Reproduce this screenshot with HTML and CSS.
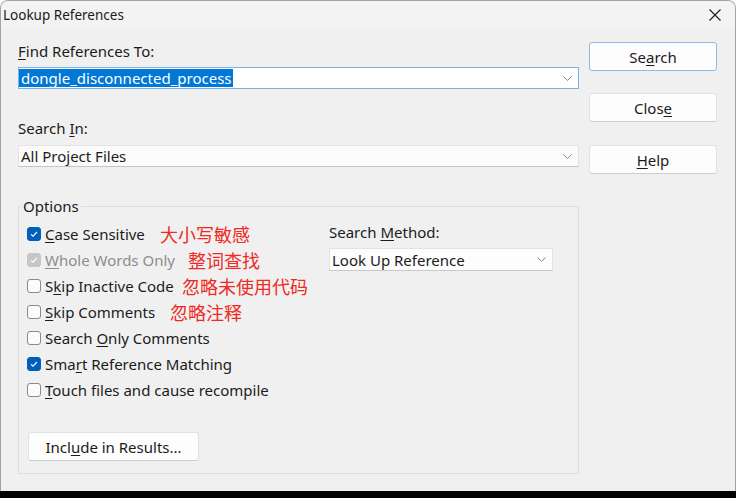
FILE: index.html
```html
<!DOCTYPE html>
<html lang="en">
<head>
<meta charset="utf-8">
<title>Lookup References</title>
<link rel="stylesheet" href="styles.css">
</head>
<body>
<div class="window">
  <div class="titlebar">
    <span class="title">Lookup References</span>
    <svg class="close-x" width="12" height="12" viewBox="0 0 12 12"><path d="M0.5 0.5 L11.5 11.5 M11.5 0.5 L0.5 11.5" stroke="#1a1a1a" stroke-width="1.1" fill="none"/></svg>
  </div>
  <div class="content">
    <div class="main">
      <div class="field-label"><u>F</u>ind References To:</div>
      <div class="combo combo-active">
        <span class="selected">dongle_disconnected_process</span>
        <svg class="chev" width="9" height="5" viewBox="0 0 9 5"><polyline points="0.5,0.5 4.5,4.5 8.5,0.5" stroke="#8a8a8a" stroke-width="1" fill="none"/></svg>
      </div>
      <div class="field-label label-searchin">Search <u>I</u>n:</div>
      <div class="combo combo-plain">
        <span class="combo-text">All Project Files</span>
        <svg class="chev" width="9" height="5" viewBox="0 0 9 5"><polyline points="0.5,0.5 4.5,4.5 8.5,0.5" stroke="#8a8a8a" stroke-width="1" fill="none"/></svg>
      </div>
      <fieldset class="options">
        <legend>Options</legend>
        <div class="options-body">
          <div class="checks">
            <div class="check-row">
              <span class="box checked"><svg width="12" height="12" viewBox="0 0 12 12"><path d="M3 6.3 L5 8.2 L9 4" stroke="#fff" stroke-width="1.1" fill="none"/></svg></span>
              <span><u>C</u>ase Sensitive</span>
              <span class="note note-case">大小写敏感</span>
            </div>
            <div class="check-row disabled">
              <span class="box checked-disabled"><svg width="12" height="12" viewBox="0 0 12 12"><path d="M3 6.3 L5 8.2 L9 4" stroke="#fff" stroke-width="1.1" fill="none"/></svg></span>
              <span><u>W</u>hole Words Only</span>
              <span class="note note-whole">整词查找</span>
            </div>
            <div class="check-row">
              <span class="box"></span>
              <span>S<u>k</u>ip Inactive Code</span>
              <span class="note note-inactive">忽略未使用代码</span>
            </div>
            <div class="check-row">
              <span class="box"></span>
              <span><u>S</u>kip Comments</span>
              <span class="note note-comments">忽略注释</span>
            </div>
            <div class="check-row">
              <span class="box"></span>
              <span>Search <u>O</u>nly Comments</span>
            </div>
            <div class="check-row">
              <span class="box checked"><svg width="12" height="12" viewBox="0 0 12 12"><path d="M3 6.3 L5 8.2 L9 4" stroke="#fff" stroke-width="1.1" fill="none"/></svg></span>
              <span>Sma<u>r</u>t Reference Matching</span>
            </div>
            <div class="check-row">
              <span class="box"></span>
              <span><u>T</u>ouch files and cause recompile</span>
            </div>
          </div>
          <div class="method">
            <div class="method-label">Search <u>M</u>ethod:</div>
            <div class="combo combo-small">
              <span class="combo-text">Look Up Reference</span>
              <svg class="chev" width="9" height="5" viewBox="0 0 9 5"><polyline points="0.5,0.5 4.5,4.5 8.5,0.5" stroke="#8a8a8a" stroke-width="1" fill="none"/></svg>
            </div>
          </div>
        </div>
        <button class="btn btn-include">Incl<u>u</u>de in Results...</button>
      </fieldset>
    </div>
    <div class="side">
      <button class="btn btn-default btn-search">Se<u>a</u>rch</button>
      <button class="btn btn-close">Clos<u>e</u></button>
      <button class="btn btn-help"><u>H</u>elp</button>
    </div>
  </div>
</div>
<div class="taskbar"></div>
</body>
</html>
```

FILE: styles.css
```css
html, body {
  margin: 0;
  padding: 0;
}
body {
  background: #ffffff;
  font-family: "Noto Sans", "Liberation Sans", sans-serif;
  font-size: 15px;
  color: #1b1b1b;
}
u {
  text-decoration-thickness: 1px;
  text-underline-offset: 2px;
}
.window {
  box-sizing: border-box;
  width: 736px;
  height: 491px;
  border: 1px solid #a3a3a3;
  border-bottom: none;
  border-radius: 8px 8px 0 0;
  background: #f0f0f0;
  overflow: hidden;
  display: flex;
  flex-direction: column;
}
.titlebar {
  height: 28px;
  flex: none;
  background: #f3f3f3;
  display: flex;
  align-items: center;
  justify-content: space-between;
  padding: 0 14px 0 2px;
}
.title {
  font-size: 13.5px;
  line-height: 18px;
}
.content {
  display: flex;
  gap: 10px;
  padding: 0 18px 0 17px;
}
.main {
  width: 561px;
  display: flex;
  flex-direction: column;
}
.field-label {
  line-height: 18px;
  margin-top: 13px;
}
.label-searchin {
  margin-top: 30px;
}
.combo {
  box-sizing: border-box;
  height: 22px;
  display: flex;
  align-items: center;
  justify-content: space-between;
  padding: 0 6px 0 2px;
  line-height: 18px;
}
.combo-active {
  margin-top: 7px;
  border: 1px solid #7ab3e6;
  background: #ffffff;
  padding-left: 0;
}
.selected {
  background: #0078d7;
  color: #ffffff;
  padding: 0 1px 0 2px;
}
.combo-plain {
  margin-top: 8px;
  background: #fbfbfb;
  border: 1px solid #e3e3e3;
  border-bottom-color: #c4c4c4;
}
.options {
  margin: 30px 0 0;
  padding: 6px 8px 12px;
  border: 1px solid #dcdcdc;
  min-width: 0;
}
.options legend {
  padding: 0 2px;
  margin-left: -6px;
  line-height: 18px;
}
.options-body {
  display: flex;
}
.checks {
  width: 302px;
  flex: none;
}
.check-row {
  position: relative;
  height: 26px;
  display: flex;
  align-items: center;
  gap: 4px;
}
.box {
  box-sizing: border-box;
  width: 14px;
  height: 14px;
  border: 1px solid #8b8b8b;
  border-radius: 3px;
  background: #fbfbfb;
  display: flex;
  align-items: center;
  justify-content: center;
}
.box.checked {
  background: #005fb8;
  border-color: #005fb8;
}
.box.checked-disabled {
  background: #c6c6c6;
  border-color: #c6c6c6;
}
.disabled {
  color: #8d8d8d;
}
.note {
  position: absolute;
  top: 0;
  line-height: 26px;
  font-family: "Noto Sans CJK SC", "Noto Sans", sans-serif;
  font-size: 18px;
  color: #ee2a24;
  white-space: nowrap;
}
.note-case { left: 133px; }
.note-whole { left: 161px; }
.note-inactive { left: 155px; }
.note-comments { left: 143px; }
.method {
  display: flex;
  flex-direction: column;
}
.method-label {
  line-height: 18px;
  margin-top: 2px;
}
.combo-small {
  width: 224px;
  height: 23px;
  margin-top: 7px;
  background: #fdfdfd;
  border: 1px solid #e3e3e3;
  border-bottom-color: #c8c8c8;
}
.btn {
  box-sizing: border-box;
  height: 29px;
  padding: 0;
  background: #fdfdfd;
  border: 1px solid #e2e2e2;
  border-bottom-color: #cdcdcd;
  border-radius: 3px;
  font: inherit;
  color: #1b1b1b;
  text-align: center;
}
.btn-include {
  display: block;
  width: 171px;
  margin-top: 29px;
  margin-left: 1px;
}
.side {
  width: 128px;
  flex: none;
  display: flex;
  flex-direction: column;
}
.side .btn {
  width: 128px;
}
.btn-search {
  margin-top: 13px;
}
.btn-default {
  border-color: #8cbbe6;
}
.btn-close {
  margin-top: 22px;
}
.btn-help {
  margin-top: 23px;
}
.taskbar {
  height: 7px;
  background: #000000;
}
```
